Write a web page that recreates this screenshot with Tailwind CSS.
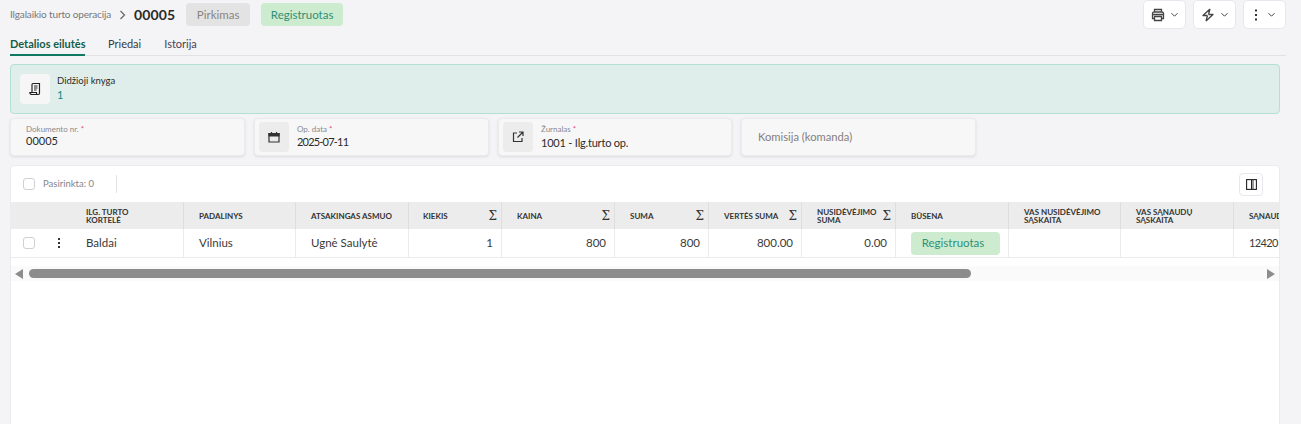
<!DOCTYPE html>
<html lang="lt">
<head>
  <meta charset="UTF-8">
  <title>Ilgalaikio turto operacija</title>
  <script src="https://cdn.jsdelivr.net/npm/@tailwindcss/browser@4"></script>
</head>
<body class="h-[424px] overflow-hidden bg-[#f4f4f6] font-['Lato',sans-serif] text-[#2b2b2b]">
  <div class="pl-[10px] pr-[15px]">
    <!-- header -->
    <header class="flex h-[30px] items-start justify-between">
      <div class="flex h-[29px] items-center">
        <span class="text-[10px] tracking-[-0.15px] text-[#77777c]">Ilgalaikio turto operacija</span>
        <svg class="ml-[8px] h-[10px] w-[7px] text-[#666]" viewBox="0 0 7 10" fill="none" stroke="currentColor" stroke-width="1.2"><path d="M1.5 1l4 4-4 4"/></svg>
        <span class="ml-[8px] text-[14px] font-bold tracking-[0.1px] text-[#2a2a2a]">00005</span>
        <span class="ml-[11px] flex h-[23px] w-[64px] items-center justify-center rounded-[4px] bg-[#e3e3e3] text-[11.5px] text-[#8a8580]">Pirkimas</span>
        <span class="ml-[11px] flex h-[23px] w-[82px] items-center justify-center rounded-[4px] bg-[#cdebcf] text-[11.5px] text-[#2f8f78]">Registruotas</span>
      </div>
      <div class="flex gap-[7px]">
        <button class="flex h-[29px] w-[43px] items-center justify-center gap-[5px] rounded-[5px] border border-[#e6e8ee] bg-white">
          <svg class="h-[14px] w-[14px]" viewBox="0 0 14 14" fill="none" stroke="#444" stroke-width="1.3"><path d="M3.5 4V1.5h7V4M3.5 10.5H1.5V5.5a1.5 1.5 0 0 1 1.5-1.5h8a1.5 1.5 0 0 1 1.5 1.5v5h-2"/><path d="M3.5 8.5h7v4h-7zM1.5 6.5h11" /></svg>
          <svg class="h-[6px] w-[9px]" viewBox="0 0 8 6" fill="none" stroke="#444" stroke-width="1"><path d="M1 1.2l3 3 3-3"/></svg>
        </button>
        <button class="flex h-[29px] w-[43px] items-center justify-center gap-[5px] rounded-[5px] border border-[#e6e8ee] bg-white">
          <svg class="h-[14px] w-[14px]" viewBox="0 0 14 14" fill="none" stroke="#444" stroke-width="1.3" stroke-linejoin="round"><path d="M9 1L2 7.5h4.5M5 13l7-6.5H7.5M9 1L7.5 6.5M5 13l1.5-5.5"/></svg>
          <svg class="h-[6px] w-[9px]" viewBox="0 0 8 6" fill="none" stroke="#444" stroke-width="1"><path d="M1 1.2l3 3 3-3"/></svg>
        </button>
        <button class="flex h-[29px] w-[43px] items-center justify-center gap-[9px] rounded-[5px] border border-[#e6e8ee] bg-white">
          <svg class="h-[12px] w-[4px]" viewBox="0 0 4 12" fill="#333"><rect x="1" y="0.5" width="2" height="2"/><rect x="1" y="5" width="2" height="2"/><rect x="1" y="9.5" width="2" height="2"/></svg>
          <svg class="h-[6px] w-[9px]" viewBox="0 0 8 6" fill="none" stroke="#444" stroke-width="1"><path d="M1 1.2l3 3 3-3"/></svg>
        </button>
      </div>
    </header>

    <!-- tabs -->
    <nav class="mt-[6px] flex h-[20px] gap-[23px] border-b border-[#e2e2e4] text-[11px] leading-[15px]">
      <a class="-mb-px h-[20px] w-[75px] whitespace-nowrap border-b-2 border-[#0f7a5f] font-bold text-[#145c4a]">Detalios eilutės</a>
      <a class="text-[#3a3a3a]">Priedai</a>
      <a class="text-[#4a3f55]">Istorija</a>
    </nav>

    <!-- ledger panel -->
    <section class="mt-[8px] mr-[6px] flex h-[50px] items-center rounded-[4px] border border-[#b3e0cf] bg-[#dfeeea] pl-[9px]">
      <div class="flex h-[30px] w-[30px] items-center justify-center rounded-[4px] bg-[#f6f6f6]">
        <svg class="h-[14px] w-[14px]" viewBox="0 0 14 14" fill="none" stroke="#222" stroke-width="1.15"><path d="M4 12.5h6.5c.8 0 1-.6 1-1.2V1.5H5c-.6 0-1 .4-1 1v8"/><path d="M1.8 10.5H8.5v1c0 .6.4 1 1 1H4c-1.2 0-2.2-.8-2.2-2zM6 4h3.5M6 6h3.5M6 8h2.5"/></svg>
      </div>
      <div class="ml-[7px] -mt-[4px]">
        <div class="text-[9.5px] leading-[13px] text-[#2b2b2b]">Didžioji knyga</div>
        <div class="mt-[1px] text-[11px] leading-[13px] text-[#128a86]">1</div>
      </div>
    </section>

    <!-- fields -->
    <section class="mt-[4px] flex gap-[9px]">
      <div class="flex h-[38px] w-[235px] flex-col rounded-[4px] border border-[#ebebed] bg-[#f7f7f8] pl-[15px] pt-[5px] shadow-[0_1px_3px_rgba(0,0,0,0.1)]">
        <span class="text-[8px] leading-[10px] text-[#8a8a8e]">Dokumento nr. <span class="text-[#e0457b]">*</span></span>
        <span class="text-[11px] leading-[14px]">00005</span>
      </div>
      <div class="flex h-[38px] w-[235px] items-center rounded-[4px] border border-[#ebebed] bg-[#f7f7f8] pl-[4px] shadow-[0_1px_3px_rgba(0,0,0,0.1)]">
        <div class="flex h-[30px] w-[30px] items-center justify-center rounded-[4px] bg-[#ececec]">
          <svg class="h-[12px] w-[12px]" viewBox="0 0 12 12" fill="none" stroke="#333" stroke-width="1.2"><path d="M1 2.5h10v8.5H1z"/><path d="M1 2.5h10v2.5H1z" fill="#333"/><path d="M3.5 1v2M8.5 1v2"/></svg>
        </div>
        <div class="ml-[8px] -mt-[1px]">
          <div class="text-[8px] leading-[10px] text-[#8a8a8e]">Op. data <span class="text-[#e0457b]">*</span></div>
          <div class="mt-[1px] text-[11px] leading-[14px] tracking-[-0.8px]">2025-07-11</div>
        </div>
      </div>
      <div class="flex h-[38px] w-[234px] items-center rounded-[4px] border border-[#ebebed] bg-[#f7f7f8] pl-[4px] shadow-[0_1px_3px_rgba(0,0,0,0.1)]">
        <div class="flex h-[30px] w-[30px] items-center justify-center rounded-[4px] bg-[#ececec]">
          <svg class="h-[12px] w-[12px]" viewBox="0 0 12 12" fill="none" stroke="#333" stroke-width="1.2"><path d="M5 2H1.5v8.5H10V7M7 1h4v4M11 1L5.5 6.5"/></svg>
        </div>
        <div class="ml-[8px] -mt-[1px]">
          <div class="text-[8px] leading-[10px] text-[#8a8a8e]">Žurnalas <span class="text-[#e0457b]">*</span></div>
          <div class="mt-[2px] text-[11px] leading-[14px] tracking-[-0.2px]">1001 - Ilg.turto op.</div>
        </div>
      </div>
      <div class="flex h-[38px] w-[235px] items-center rounded-[4px] border border-[#ebebed] bg-[#f7f7f8] pl-[16px] shadow-[0_1px_3px_rgba(0,0,0,0.1)]">
        <span class="text-[11.2px] text-[#85807c]">Komisija (komanda)</span>
      </div>
    </section>

    <!-- table card -->
    <section class="mt-[9px] mr-[6px] h-[300px] overflow-hidden rounded-t-[4px] border border-[#ebebed] bg-white">
      <div class="flex h-[36px] items-center pl-[12px] pr-[16px]">
        <span class="h-[12px] w-[12px] rounded-[3px] border border-[#d0d0d4]"></span>
        <span class="ml-[8px] text-[9.5px] text-[#85858a]">Pasirinkta: 0</span>
        <span class="ml-[22px] h-[18px] w-px bg-[#e2e2e4]"></span>
        <button class="ml-auto flex h-[23px] w-[24px] items-center justify-center rounded-[4px] border border-[#e6e8ee]">
          <svg class="h-[11px] w-[11px]" viewBox="0 0 11 11"><rect x="5.5" y="1" width="2.5" height="9" fill="#999"/><rect x="0.6" y="0.6" width="9.8" height="9.8" fill="none" stroke="#222" stroke-width="1.1"/><path d="M5.5 1v9" stroke="#222"/></svg>
        </button>
      </div>

      <div class="grid w-max grid-cols-[63px_110px_112px_113px_93px_113px_94px_93px_94px_113px_112px_113px_113px] text-[8px] font-bold uppercase leading-[8px] text-[#333]">
        <div class="h-[27px] bg-[#ececec]"></div>
        <div class="flex h-[27px] items-center border-r border-[#dedede] bg-[#ececec] pl-[12px]">Ilg. turto<br>kortelė</div>
        <div class="flex h-[27px] items-center border-r border-[#dedede] bg-[#ececec] pl-[15px]">Padalinys</div>
        <div class="flex h-[27px] items-center border-r border-[#dedede] bg-[#ececec] pl-[15px]">Atsakingas asmuo</div>
        <div class="flex h-[27px] items-center justify-between border-r border-[#dedede] bg-[#ececec] pl-[14px] pr-[4px]">Kiekis<span class="font-['DejaVu_Serif',serif] text-[12px] font-normal">Σ</span></div>
        <div class="flex h-[27px] items-center justify-between border-r border-[#dedede] bg-[#ececec] pl-[15px] pr-[4px]">Kaina<span class="font-['DejaVu_Serif',serif] text-[12px] font-normal">Σ</span></div>
        <div class="flex h-[27px] items-center justify-between border-r border-[#dedede] bg-[#ececec] pl-[15px] pr-[4px]">Suma<span class="font-['DejaVu_Serif',serif] text-[12px] font-normal">Σ</span></div>
        <div class="flex h-[27px] items-center justify-between border-r border-[#dedede] bg-[#ececec] pl-[15px] pr-[4px]">Vertės suma<span class="font-['DejaVu_Serif',serif] text-[12px] font-normal">Σ</span></div>
        <div class="flex h-[27px] items-center justify-between border-r border-[#dedede] bg-[#ececec] pl-[15px] pr-[4px]"><span class="w-[60px] overflow-hidden">Nusidėvėjimo<br>suma</span><span class="font-['DejaVu_Serif',serif] text-[12px] font-normal">Σ</span></div>
        <div class="flex h-[27px] items-center border-r border-[#dedede] bg-[#ececec] pl-[15px]">Būsena</div>
        <div class="flex h-[27px] items-center border-r border-[#dedede] bg-[#ececec] pl-[15px]">VAS nusidėvėjimo<br>sąskaita</div>
        <div class="flex h-[27px] items-center border-r border-[#dedede] bg-[#ececec] pl-[15px]">VAS sąnaudų<br>sąskaita</div>
        <div class="flex h-[27px] items-center bg-[#ececec] pl-[15px]">Sąnaudų</div>
      </div>
      <div class="grid h-[29px] w-max grid-cols-[63px_110px_112px_113px_93px_113px_94px_93px_94px_113px_112px_113px_113px] border-b border-[#ebebed] text-[11.5px] font-normal text-[#3a3a3a]">
        <div class="flex items-center pl-[12px]">
          <span class="h-[12px] w-[12px] rounded-[3px] border border-[#d0d0d4]"></span>
          <svg class="ml-[22px] h-[12px] w-[4px]" viewBox="0 0 4 12" fill="#333"><rect x="1" y="1" width="2" height="2"/><rect x="1" y="5" width="2" height="2"/><rect x="1" y="9" width="2" height="2"/></svg>
        </div>
        <div class="flex items-center border-r border-[#ebebed] pl-[12px]">Baldai</div>
        <div class="flex items-center border-r border-[#ebebed] pl-[15px]">Vilnius</div>
        <div class="flex items-center border-r border-[#ebebed] pl-[15px]">Ugnė Saulytė</div>
        <div class="flex items-center justify-end border-r border-[#ebebed] pr-[8px]">1</div>
        <div class="flex items-center justify-end border-r border-[#ebebed] pr-[8px]">800</div>
        <div class="flex items-center justify-end border-r border-[#ebebed] pr-[8px]">800</div>
        <div class="flex items-center justify-end border-r border-[#ebebed] pr-[8px]">800.00</div>
        <div class="flex items-center justify-end border-r border-[#ebebed] pr-[8px]">0.00</div>
        <div class="flex items-center border-r border-[#ebebed] pl-[15px]">
          <span class="flex h-[23px] w-[89px] items-center justify-center rounded-[4px] bg-[#cdebcf] pr-[5px] text-[#2f8f78]">Registruotas</span>
        </div>
        <div class="border-r border-[#ebebed]"></div>
        <div class="border-r border-[#ebebed]"></div>
        <div class="flex items-center pl-[15px] text-[11px] tracking-[-0.6px]">12420</div>
      </div>

      <!-- horizontal scrollbar -->
      <div class="mt-[8px] flex h-[15px] items-center bg-[#fafafa] pl-[4px] pr-[4px]">
        <span class="h-0 w-0 border-y-[5px] border-r-[8px] border-y-transparent border-r-[#8c8c8c]"></span>
        <span class="ml-[6px] h-[9px] w-[942px] rounded-full bg-[#8c8c8c]"></span>
        <span class="ml-auto h-0 w-0 border-y-[5px] border-l-[8px] border-y-transparent border-l-[#8c8c8c]"></span>
      </div>
    </section>
  </div>
</body>
</html>
